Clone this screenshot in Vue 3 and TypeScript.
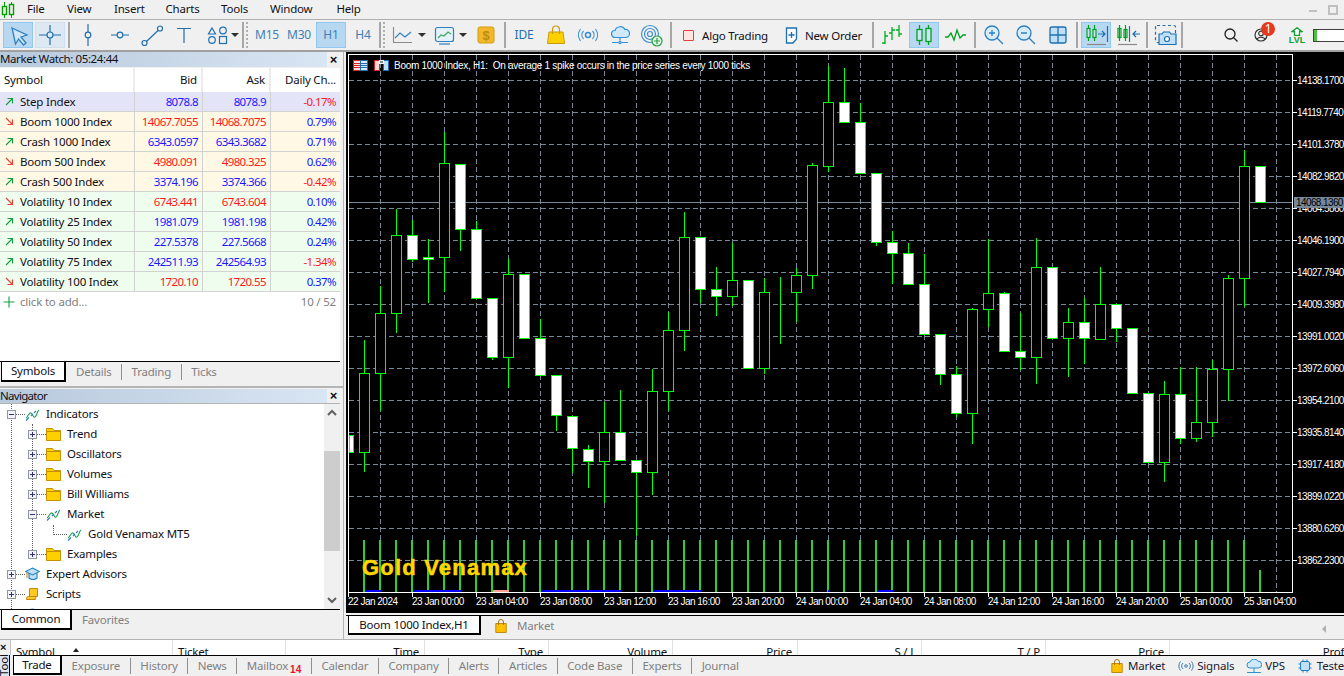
<script setup lang="ts">
type Candle = [string, number, number, number, number]
const raw: Candle[] = [
  ['w',435,435,452,452],['b',340,373,452,471],['b',286,313,373,410],['b',209,235,313,332],['w',220,235,259,261],
  ['w',239,257,259,302],['b',132,163,257,291],['w',164,164,229,250],['w',221,229,298,298],['w',298,298,357,359],
  ['b',259,274,357,387],['w',274,274,338,338],['w',319,338,375,375],['w',375,375,415,430],['w',416,416,448,472],
  ['w',445,449,461,487],['b',402,432,461,502],['w',390,432,460,460],['w',460,460,472,535],['b',369,391,472,494],
  ['b',312,330,391,410],['b',212,237,330,350],['w',237,237,289,302],['w',267,289,296,315],['b',243,280,296,305],
  ['w',280,280,368,368],['b',278,292,368,373],['b',277,292,292,343],['b',268,275,292,321],['b',163,165,275,288],
  ['b',66,102,166,171],['w',68,102,122,122],['w',103,122,173,173],['w',173,173,242,245],['w',231,242,253,283],
  ['w',243,253,284,284],['w',254,284,334,334],['w',334,334,374,384],['w',366,374,413,416],['b',308,309,413,443],
  ['b',239,293,309,326],['w',292,293,351,351],['w',313,351,357,369],['b',238,267,357,383],['w',267,267,338,338],
  ['b',308,322,338,376],['w',298,322,338,363],['b',267,304,339,339],['w',304,304,328,341],['w',328,328,393,393],
  ['w',393,393,462,462],['b',381,394,462,481],['w',367,394,438,443],['b',367,422,438,441],['b',360,369,422,436],
  ['b',275,278,369,400],['b',150,166,278,306],['w',166,166,202,202],
]
const candles = raw.map((c, i) => ({ x: 348 + i * 16, white: c[0] === 'w', hi: c[1], top: c[2], bot: c[3], lo: c[4] }))
const bars = candles.slice(1).map((c) => ({ x: c.x, top: c.x === 1260 ? 570 : 540 }))
const blues = [[365, 16], [413, 48], [541, 80], [653, 48], [828, 2], [877, 16]]

const prices = ['14138.1700','14119.7740','14101.3780','14082.9820','14064.5860','14046.1900','14027.7940','14009.3980','13991.0020','13972.6060','13954.2100','13935.8140','13917.4180','13899.0220','13880.6260','13862.2300']
  .map((t, i) => ({ t, y: 80 + i * 32 }))
const vgrid = Array.from({ length: 29 }, (_, i) => 380 + i * 32)
const times = ['22 Jan 2024','23 Jan 00:00','23 Jan 04:00','23 Jan 08:00','23 Jan 12:00','23 Jan 16:00','23 Jan 20:00','24 Jan 00:00','24 Jan 04:00','24 Jan 08:00','24 Jan 12:00','24 Jan 16:00','24 Jan 20:00','25 Jan 00:00','25 Jan 04:00']
  .map((t, i) => ({ t, x: 348 + i * 64 }))
const note = 'Boom 1000 Index, H1:  On average 1 spike occurs in the price series every 1000 ticks'

const menus = [
  { t: 'File', w: 40 }, { t: 'View', w: 47 }, { t: 'Insert', w: 51.5 }, { t: 'Charts', w: 55.5 },
  { t: 'Tools', w: 49 }, { t: 'Window', w: 66.5 }, { t: 'Help', w: 40 },
]

const quotes = [
  { s: 'Step Index', b: '8078.8', a: '8078.9', c: '-0.17%', up: true, q: 'up', neg: true, k: 'step' },
  { s: 'Boom 1000 Index', b: '14067.7055', a: '14068.7075', c: '0.79%', up: false, q: 'dn', neg: false, k: 'cream' },
  { s: 'Crash 1000 Index', b: '6343.0597', a: '6343.3682', c: '0.71%', up: true, q: 'up', neg: false, k: 'cream' },
  { s: 'Boom 500 Index', b: '4980.091', a: '4980.325', c: '0.62%', up: false, q: 'dn', neg: false, k: 'cream' },
  { s: 'Crash 500 Index', b: '3374.196', a: '3374.366', c: '-0.42%', up: true, q: 'up', neg: true, k: 'cream' },
  { s: 'Volatility 10 Index', b: '6743.441', a: '6743.604', c: '0.10%', up: false, q: 'dn', neg: false, k: 'mint' },
  { s: 'Volatility 25 Index', b: '1981.079', a: '1981.198', c: '0.42%', up: true, q: 'up', neg: false, k: 'mint' },
  { s: 'Volatility 50 Index', b: '227.5378', a: '227.5668', c: '0.24%', up: true, q: 'up', neg: false, k: 'mint' },
  { s: 'Volatility 75 Index', b: '242511.93', a: '242564.93', c: '-1.34%', up: true, q: 'up', neg: true, k: 'mint' },
  { s: 'Volatility 100 Index', b: '1720.10', a: '1720.55', c: '0.37%', up: false, q: 'dn', neg: false, k: 'mint' },
]

const tree = [
  { t: 'Indicators', l: 'l0', box: 'minus', icon: 'ind' },
  { t: 'Trend', l: 'l1', box: 'plus', icon: 'folder' },
  { t: 'Oscillators', l: 'l1', box: 'plus', icon: 'folder' },
  { t: 'Volumes', l: 'l1', box: 'plus', icon: 'folder' },
  { t: 'Bill Williams', l: 'l1', box: 'plus', icon: 'folder' },
  { t: 'Market', l: 'l1', box: 'minus', icon: 'ind' },
  { t: 'Gold Venamax MT5', l: 'l2', box: '', icon: 'ind' },
  { t: 'Examples', l: 'l1', box: 'plus', icon: 'folder' },
  { t: 'Expert Advisors', l: 'l0', box: 'plus', icon: 'cap' },
  { t: 'Scripts', l: 'l0', box: 'plus', icon: 'script' },
]

const cols = [
  { t: 'Symbol', w: 162, left: true, sort: true },
  { t: 'Ticket', w: 113, left: true },
  { t: 'Time', w: 139 }, { t: 'Type', w: 124 }, { t: 'Volume', w: 124 }, { t: 'Price', w: 125 },
  { t: 'S / L', w: 124 }, { t: 'T / P', w: 124 }, { t: 'Price', w: 124 }, { t: 'Profit', w: 187 },
]
const lowerTabs = ['Exposure', 'History', 'News', 'Mailbox', 'Calendar', 'Company', 'Alerts', 'Articles', 'Code Base', 'Experts', 'Journal']
</script>

<template>
  <div class="app">
    <header class="menu">
      <svg class="logo" width="16" height="18" viewBox="0 0 16 18" fill="none" stroke="#00a000">
        <path d="M4.5 1v16M11.5 1v16" stroke-width="1" />
        <rect x="2.5" y="5.5" width="4" height="8" fill="#f0f0f0" stroke-width="1.4" />
        <rect x="9.5" y="3.5" width="4" height="10" fill="#f0f0f0" stroke-width="1.4" />
      </svg>
      <span v-for="m in menus" :key="m.t" class="menu-item" :style="{ width: m.w + 'px' }">{{ m.t }}</span>
      <span class="win-min"></span>
      <span class="win-max"></span>
    </header>

    <div class="toolbar">
      <button class="b on">
        <svg width="30" height="26" fill="#cfe6f7" stroke="#2f7fc0" stroke-width="1.3"><path d="M9 6l15 7-6 2 5 6-2.500 2-5-6-3 5z" /></svg>
      </button>
      <button class="b hov">
        <svg width="30" height="26" fill="none" stroke="#1f6fb0" stroke-width="1.2"><path d="M15 3v7M15 16v7M4 13h8M18 13h8" /><circle cx="15" cy="13" r="3" /></svg>
      </button>
      <i class="sep"></i>
      <button class="b"><svg width="30" height="26" fill="none" stroke="#1f6fb0" stroke-width="1.2"><path d="M15 2v8M15 16v8" /><circle cx="15" cy="13" r="2.800" /></svg></button>
      <button class="b"><svg width="30" height="26" fill="none" stroke="#1f6fb0" stroke-width="1.2"><path d="M6 13h6M18 13h6" /><circle cx="15" cy="13" r="2.800" /></svg></button>
      <button class="b"><svg width="30" height="26" fill="none" stroke="#1f6fb0" stroke-width="1.2"><path d="M9.500 19.500L21 8.500" /><circle cx="7.500" cy="21" r="2.500" /><circle cx="23" cy="6.500" r="2.500" /></svg></button>
      <button class="b"><svg width="30" height="26" fill="none" stroke="#1f6fb0" stroke-width="1.2"><path d="M8 6.500h14M15 6.500V21" /></svg></button>
      <button class="b mr0"><svg width="30" height="26" fill="none" stroke="#1f6fb0" stroke-width="1.2"><path d="M11 6l3.500 6h-7z" /><circle cx="22" cy="8.500" r="3.300" /><circle cx="11" cy="18" r="3.300" /><rect x="18.500" y="14.500" width="7" height="7" /></svg></button>
      <i class="caret"></i>
      <i class="sep s3"></i><i class="grip g1"></i>
      <button class="b tf">M15</button>
      <button class="b tf">M30</button>
      <button class="b tf on">H1</button>
      <button class="b tf">H4</button>
      <i class="sep s4"></i><i class="grip g2"></i>
      <button class="b mr0"><svg width="30" height="26" fill="none" stroke-width="1.1"><path d="M5.500 5v15.500H24" stroke="#8a8a8a" /><path d="M7 16l5-5 5 4 6-5" stroke="#2f7fc0" /></svg></button>
      <i class="caret"></i>
      <button class="b mr0 ml3"><svg width="30" height="26" fill="none" stroke-width="1.2"><rect x="6.500" y="5.500" width="18" height="14" rx="2" stroke="#2f7fc0" fill="#e4f2fc" /><path d="M9 16l3-3 3 1 4-4 3 2" stroke="#40a860" /><path d="M10 22h11" stroke="#2f7fc0" /></svg></button>
      <i class="caret"></i>
      <button class="b ml4"><svg width="30" height="26"><rect x="7" y="5" width="16" height="16" rx="2" fill="#f2b829" stroke="#d89a10" /><text x="15" y="18" text-anchor="middle" class="dollar">$</text></svg></button>
      <i class="sep"></i>
      <button class="b ide">IDE</button>
      <button class="b">
        <svg width="30" height="26"><path d="M8 10h14l1.500 11.500h-17z" fill="#ffd000" stroke="#c89a10" /><path d="M11.500 12V7.500a3.500 3.500 0 0 1 7 0V12" fill="none" stroke="#c89a10" stroke-width="1.2" /></svg>
      </button>
      <button class="b">
        <svg width="30" height="26" fill="none" stroke="#3f8fd0" stroke-width="1.2"><circle cx="15" cy="13" r="2.500" stroke-width="1.600" /><path d="M10.500 9a6 6 0 0 0 0 8M19.500 9a6 6 0 0 1 0 8M7.500 7a10 10 0 0 0 0 12M22.500 7a10 10 0 0 1 0 12" /></svg>
      </button>
      <button class="b">
        <svg width="30" height="26" fill="none" stroke="#2f8fd8" stroke-width="1.2"><path d="M10 15.500a3.500 3.500 0 0 1 0-7 5.500 5.500 0 0 1 10-1 4 4 0 0 1 1 8z" fill="#cfe8fa" /><path d="M15 15.500v3M7 20.500h6M17 20.500h6" /><circle cx="15" cy="20.500" r="1.200" /></svg>
      </button>
      <button class="b">
        <svg width="30" height="26" fill="none"><g stroke="#3f8fd0" stroke-width="1.2"><circle cx="13" cy="12" r="8.500" /><circle cx="13" cy="12" r="5.500" /><circle cx="13" cy="12" r="2.500" /></g><circle cx="20" cy="19" r="5" fill="#e8f8ea" stroke="#20a040" stroke-width="1.200" /><path d="M20 16v6M17 19h6" stroke="#20a040" stroke-width="1.200" /></svg>
      </button>
      <i class="sep sm2"></i>
      <button class="tx algo"><i class="algo-box"></i><span>Algo Trading</span></button>
      <button class="tx neword">
        <svg width="13" height="17" fill="#fff" stroke="#1f6fb0" stroke-width="1.3"><path d="M1.500 1h10v11l-3.500 4H1.500z" /><path d="M6.500 5v6M3.500 8h6" /></svg>
        <span>New Order</span>
      </button>
      <i class="sep s0"></i>
      <button class="b">
        <svg width="30" height="26" fill="none" stroke="#00b020" stroke-width="1.3"><path d="M8 9v13M5 21h3M8 14h3M15 5v13M12 11h3M15 8h3M22 3v12M19 8h3M22 12h3" /></svg>
      </button>
      <button class="b on">
        <svg width="30" height="26" fill="none" stroke="#00a020" stroke-width="1.300"><path d="M10.500 3v20M19.500 3v20" /><rect x="8" y="7.500" width="5" height="11" fill="#cfe6f7" /><rect x="17" y="6.500" width="5" height="13" fill="#cfe6f7" /></svg>
      </button>
      <button class="b">
        <svg width="30" height="26" fill="none" stroke="#00a020" stroke-width="1.300"><path d="M4 15h3l3-4 3 7 3-10 3 8 3-3h3" /></svg>
      </button>
      <i class="sep"></i>
      <button class="b"><svg width="30" height="26" fill="none" stroke="#2f7fc0" stroke-width="1.300"><circle cx="13" cy="11" r="7" fill="#d8ecfa" /><path d="M18 16l6 6M10 11h6M13 8v6" /></svg></button>
      <button class="b"><svg width="30" height="26" fill="none" stroke="#2f7fc0" stroke-width="1.300"><circle cx="13" cy="11" r="7" fill="#d8ecfa" /><path d="M18 16l6 6M10 11h6" /></svg></button>
      <button class="b"><svg width="30" height="26" stroke="#1f6fb0" stroke-width="1.300"><rect x="7" y="5" width="16" height="16" rx="2" fill="#bfe0f8" /><path d="M15 5v16M7 13h16" fill="none" /></svg></button>
      <i class="sep"></i>
      <button class="b on"><svg width="30" height="26" fill="none" stroke-width="1.200"><path d="M7.500 3v16M13.500 3v16" stroke="#00a020" /><rect x="6" y="6.500" width="3" height="9" fill="#cfe6f7" stroke="#00a020" /><rect x="12" y="7.500" width="3" height="8" fill="#cfe6f7" stroke="#00a020" /><path d="M17 12h7M21 9l3 3-3 3M26.500 4v16" stroke="#1f6fb0" /><path d="M6 22.500h19" stroke="#8a8a8a" /></svg></button>
      <button class="b"><svg width="30" height="26" fill="none" stroke-width="1.200"><path d="M6.500 3v16M12.500 3v16" stroke="#00a020" /><rect x="5" y="6.500" width="3" height="9" stroke="#00a020" /><rect x="11" y="7.500" width="3" height="8" stroke="#00a020" /><path d="M16.500 4v16M27 12h-7M23 9l-3 3 3 3" stroke="#1f6fb0" /><path d="M5 22.500h19" stroke="#8a8a8a" /></svg></button>
      <i class="sep"></i>
      <button class="b mr0"><svg width="30" height="26" fill="none" stroke="#1f6fb0" stroke-width="1.200"><rect x="4.500" y="3.500" width="20" height="17" rx="1.500" stroke-dasharray="3 2.500" /><path d="M11 12l1.500-2h6l1.500 2h5v10.500H8V12z" fill="#bfe0f8" /><circle cx="16" cy="17" r="2.500" fill="#fff" /></svg></button>
      <i class="sep s00"></i>
      <div class="tool-right">
        <svg class="ic-search" width="14" height="14" fill="none" stroke="#222" stroke-width="1.300"><circle cx="6" cy="6" r="5" /><path d="M9.500 9.500l4 4" /></svg>
        <div class="user">
          <svg width="14" height="14" fill="none" stroke="#333" stroke-width="1.200"><circle cx="7" cy="7" r="6" /><circle cx="7" cy="5.500" r="2.300" /><path d="M2.800 11.500c1-3 7.400-3 8.400 0" /></svg>
          <span class="badge">1</span>
        </div>
        <div class="lvl">
          <svg width="12" height="9" fill="#fff" stroke="#10a030" stroke-width="1.300"><path d="M6 .8L11 4.500H8.500V8.500H3.500V4.500H1z" /></svg>
          <span>LVL</span>
        </div>
        <div class="bar"><i></i></div>
      </div>
    </div>

    <div class="work">
      <aside class="left">
        <section class="market">
          <div class="title"><span class="title-fill">Market Watch: 05:24:44</span><b class="close">×</b></div>
          <div class="grid head">
            <div class="c sym">Symbol</div><div class="c r">Bid</div><div class="c r">Ask</div><div class="c r">Daily Ch...</div>
          </div>
          <div v-for="q in quotes" :key="q.s" class="grid row" :class="q.k">
            <div class="c sym">
              <svg v-if="q.up" class="arrow" width="9" height="9" fill="none" stroke="#10a040" stroke-width="1.100"><path d="M1 8L7.500 1.500M2.500 1.500h5v5" /></svg>
              <svg v-else class="arrow" width="9" height="9" fill="none" stroke="#e84030" stroke-width="1.100"><path d="M1 1l6.500 6.500M2.500 7.500h5v-5" /></svg>
              <span>{{ q.s }}</span>
            </div>
            <div class="c r num" :class="q.q">{{ q.b }}</div>
            <div class="c r num" :class="q.q">{{ q.a }}</div>
            <div class="c r num" :class="q.neg ? 'dn' : 'up'">{{ q.c }}</div>
          </div>
          <div class="add">
            <svg width="12" height="12" stroke="#10a040" stroke-width="1.100"><path d="M6 .5v11M.5 6h11" /></svg>
            <span>click to add...</span><em>10 / 52</em>
          </div>
          <div class="fill"></div>
          <div class="tabs mw-tabs">
            <span class="tab active sym-tab">Symbols</span>
            <span class="tab off">Details</span><span class="tab off">Trading</span><span class="tab off last">Ticks</span>
          </div>
        </section>

        <section class="nav">
          <div class="title"><span class="title-fill">Navigator</span><b class="close">×</b></div>
          <div class="nav-body">
            <div class="tree">
              <i class="vline v0"></i><i class="vline v1"></i>
              <div v-for="n in tree" :key="n.t" class="node" :class="n.l">
                <span v-if="n.box" class="box"><i></i><i v-if="n.box === 'plus'" class="vert"></i></span>
                <span class="conn"></span>
                <svg v-if="n.icon === 'folder'" class="ni" width="15" height="13"><path d="M.5 12.500V.5h6l1.500 2h6.500v10z" fill="#ffd000" stroke="#c89000" /><path d="M.5 3.500h14" stroke="#c89000" /></svg>
                <svg v-else-if="n.icon === 'ind'" class="ni" width="15" height="13" fill="none" stroke-width="1.100"><path d="M1 10c2-1 3-6 5-5s2 5 4 4 2-6 4-7" stroke="#20a050" /><path d="M1 12.500l3-3M6 8l2-2M9 5l2-2" stroke="#2f7fc0" /></svg>
                <svg v-else-if="n.icon === 'cap'" class="ni" width="15" height="14" fill="#bfe0f8" stroke="#1f7fc0" stroke-width="1.100"><path d="M4 6v5c2 2 6 2 8 0V6" /><path d="M7.500 1l7 3.500-7 3.500L.5 4.500z" /><path d="M2 5v6" fill="none" stroke="#d09000" /></svg>
                <svg v-else class="ni" width="15" height="14" fill="#ffc820" stroke="#c08800"><path d="M4.500 1.500h8v8h-8zM1.500 12.500c0-3 1-3 3-3h7c-1 1-1 2-1 3z" /></svg>
                <span class="nt">{{ n.t }}</span>
              </div>
              <div class="node l0">
                <span class="box"><i></i><i class="vert"></i></span><span class="conn"></span>
                <svg class="ni" width="15" height="13" fill="#bfe0f8" stroke="#2f7fc0"><circle cx="7.500" cy="6" r="5" /></svg>
              </div>
            </div>
            <div class="scroll">
              <svg width="16" height="17" fill="none" stroke="#606060" stroke-width="2"><path d="M4 11l4-4 4 4" /></svg>
              <div class="thumb"></div>
              <svg class="down" width="16" height="17" fill="none" stroke="#606060" stroke-width="2"><path d="M4 6l4 4 4-4" /></svg>
            </div>
          </div>
          <div class="tabs nv-tabs">
            <span class="tab active com-tab">Common</span><span class="tab off last">Favorites</span>
          </div>
        </section>
      </aside>

      <main class="right">
        <div class="chart">
          <svg width="998" height="561" viewBox="346 52 998 561" class="plot">
            <rect x="346" y="52" width="998" height="561" fill="#000" />
            <path d="M348.500 592.500V54.500H1292.500V592.500H348.500" fill="none" stroke="#fff" shape-rendering="crispEdges" />
            <g stroke="#778899" stroke-dasharray="5 3" shape-rendering="crispEdges">
              <line v-for="p in prices" :key="p.t" x1="349" :y1="p.y + 0.5" x2="1292" :y2="p.y + 0.5" />
              <line v-for="x in vgrid" :key="x" :x1="x + 0.5" y1="55" :x2="x + 0.5" y2="592" />
            </g>
            <line x1="349" y1="202.500" x2="1292" y2="202.500" stroke="#778899" shape-rendering="crispEdges" />
            <g fill="#32cd32" shape-rendering="crispEdges">
              <rect v-for="b in bars" :key="b.x" :x="b.x - 1" :y="b.top" width="2" :height="592 - b.top" />
            </g>
            <g fill="#0000ff" shape-rendering="crispEdges">
              <rect v-for="b in blues" :key="b[0]" :x="b[0]" y="590" :width="b[1]" height="2" />
            </g>
            <rect x="493" y="590" width="16" height="2" fill="#ffa090" shape-rendering="crispEdges" />
            <g stroke="#00ff00" shape-rendering="crispEdges">
              <template v-for="c in candles" :key="c.x">
                <line v-if="c.x > 348" :x1="c.x + 0.5" :y1="c.hi" :x2="c.x + 0.5" :y2="c.lo + 1" />
                <rect v-if="c.x > 348" :x="c.x - 4.500" :y="c.top + 0.5" width="10" :height="c.bot - c.top" :fill="c.white ? '#fff' : '#000'" />
                <rect v-else x="349.500" :y="c.top + 0.5" width="4" :height="c.bot - c.top" fill="#fff" />
              </template>
            </g>
            <g fill="#fff" stroke="none">
              <g v-for="p in prices" :key="p.t">
                <rect x="1292" :y="p.y" width="5" height="1" shape-rendering="crispEdges" />
                <text x="1297" :y="p.y + 4" class="axis pr">{{ p.t }}</text>
              </g>
              <g v-for="t in times" :key="t.t">
                <rect :x="t.x" y="592" width="1" height="5" shape-rendering="crispEdges" />
                <text :x="t.x" y="605" class="axis">{{ t.t }}</text>
              </g>
            </g>
            <rect x="1294" y="197" width="50" height="11" fill="#778899" shape-rendering="crispEdges" />
            <text x="1296" y="206" class="axis pr dark">14068.1360</text>
            <g shape-rendering="crispEdges">
              <rect x="353.500" y="60.500" width="7" height="10" fill="#ffe0e0" stroke="#e02020" />
              <rect x="360.500" y="60.500" width="7" height="10" fill="#d8ecfa" stroke="#1f6fb0" />
              <path d="M354 63.500h6M354 65.500h6M354 67.500h6" stroke="#e02020" />
              <path d="M361 63.500h6M361 65.500h6M361 67.500h6" stroke="#1f6fb0" />
              <path d="M374.500 60.500h5v10h-5z" fill="#ffd8d8" stroke="#e02020" />
              <path d="M383.500 60.500h5v10h-5z" fill="#bfe0f8" stroke="#1f6fb0" />
              <rect x="379" y="60" width="5" height="4" fill="#fff" />
              <rect x="380" y="61" width="3" height="2" fill="#888" />
            </g>
            <text x="394" y="68.500" class="note">{{ note }}</text>
            <text x="362" y="575" class="brand">Gold Venamax</text>
          </svg>
        </div>
        <div class="chart-tabs">
          <span class="chart-tab">Boom 1000 Index,H1</span>
          <svg class="bag" width="12" height="14"><path d="M.8 4.500h10.400v9H.8z" fill="#ffc000" stroke="#c08a10" /><path d="M3.500 6V3a2.500 2.500 0 0 1 5 0v3" fill="none" stroke="#a07810" /></svg>
          <span class="chart-off">Market</span>
          <i class="back"></i>
        </div>
      </main>
    </div>

    <footer class="bottom">
      <div class="side">
        <b class="side-x">×</b>
        <div class="side-text"><span>Toolbox</span></div>
      </div>
      <div class="tool">
        <div class="thead">
          <div v-for="(c, i) in cols" :key="i" class="th" :class="{ tl: c.left }" :style="{ width: c.w + 'px' }">
            {{ c.t }}<i v-if="c.sort" class="sort"></i>
          </div>
        </div>
        <div class="low">
          <span class="low-active">Trade</span>
          <span v-for="t in lowerTabs" :key="t" class="low-tab">{{ t }}<sub v-if="t === 'Mailbox'">14</sub></span>
          <div class="links">
            <svg width="12" height="14"><path d="M.8 4.500h10.400v9H.8z" fill="#ffc000" stroke="#c08a10" /><path d="M3.500 6V3a2.500 2.500 0 0 1 5 0v3" fill="none" stroke="#a07810" /></svg>
            <span class="l1t">Market</span>
            <svg class="li" width="16" height="10" fill="none" stroke="#3f7fb0"><circle cx="8" cy="5" r="1.300" /><path d="M5 2a4 4 0 0 0 0 6M11 2a4 4 0 0 1 0 6M2.500 .5a7 7 0 0 0 0 9M13.500 .5a7 7 0 0 1 0 9" /></svg>
            <span class="l2t">Signals</span>
            <svg class="li2" width="16" height="15" fill="#cfe8fa" stroke="#2f8fd0"><path d="M4 9a3 3 0 0 1 0-6 4.500 4.500 0 0 1 8-.8A3.400 3.400 0 0 1 12.500 9z" /><path d="M8 9v4M1 13.500h14" fill="none" /></svg>
            <span class="l3t">VPS</span>
            <svg class="li3" width="14" height="14" fill="#bfe0f8" stroke="#1f7fc0"><rect x="2.500" y="2.500" width="9" height="9" rx="1.500" /><path d="M5 .5v2M9 .5v2M5 11.500v2M9 11.500v2M.5 5h2M.5 9h2M11.500 5h2M11.500 9h2" /></svg>
            <span class="l4t">Tester</span>
          </div>
        </div>
      </div>
    </footer>
  </div>
</template>

<style>
html, body { margin: 0; background: #f0f0f0; overflow: hidden; }
</style>

<style scoped>
.app { width: 1344px; height: 676px; overflow: hidden; display: flex; flex-direction: column; background: #f0f0f0; font: 11.5px/16px "Noto Sans", sans-serif; letter-spacing: -0.2px; color: #101018; }
button { font: inherit; letter-spacing: inherit; color: inherit; background: none; border: 0; padding: 0; }
svg { display: block; flex: none; }

.menu { height: 19px; border-bottom: 1px solid #b0b0b0; display: flex; align-items: center; box-sizing: content-box; position: relative; }
.logo { margin-right: 11px; }
.menu-item { flex: none; position: relative; top: -1px; }
.win-min { position: absolute; left: 1309px; top: 10px; width: 8px; height: 2px; background: #c0c0c0; }
.win-max { position: absolute; left: 1328px; top: 5px; width: 6px; height: 6px; border: 2px solid #c0c0c0; }

.toolbar { height: 30px; border-bottom: 2px solid #a0a0a0; display: flex; align-items: center; padding-left: 3px; }
.b { width: 30px; height: 26px; margin-right: 2px; flex: none; border: 1px solid transparent; box-sizing: border-box; display: flex; align-items: center; justify-content: center; overflow: hidden; }
.b svg { margin: -1px; }
.b.on { background: #b8d8f2; border-color: #90c8f0; }
.b.hov { background: #dde8f2; border-color: #d0e0f0; }
.mr0 { margin-right: 0; }
.ml3 { margin-left: 3px; }
.ml4 { margin-left: 4px; }
.tf { color: #3f7fb5; font-size: 12px; }
.ide { color: #1f6fb0; font-size: 12px; }
.dollar { font: bold 13px "Liberation Sans", sans-serif; fill: #c08a10; }
.sep { width: 2px; height: 26px; background: #a6a6a6; flex: none; margin: 0 3px 0 1px; }
.s3 { margin: 0 0 0 3px; }
.s4 { margin: 0 0 0 -1px; }
.sm2 { margin-right: 2px; }
.s0 { margin: 0 3px 0 0; }
.s00 { margin: 0; }
.grip { width: 2px; height: 26px; flex: none; background: repeating-linear-gradient(#b0b0b0 0 2px, transparent 2px 4px); }
.g1 { margin: 0 4px 0 2px; }
.g2 { margin: 0 3px 0 2px; }
.caret { width: 8px; height: 8px; flex: none; position: relative; }
.caret::after { content: ""; position: absolute; left: 0; top: 2px; border: 4px solid transparent; border-top: 4px solid #303030; border-bottom: 0; }
.tx { height: 26px; display: flex; align-items: center; flex: none; white-space: nowrap; }
.tx span { position: relative; top: 1px; }
.algo { width: 105px; padding-left: 9px; box-sizing: border-box; gap: 8px; }
.algo-box { width: 9px; height: 9px; border: 1px solid #e04040; background: #ffe4e0; border-radius: 1px; flex: none; }
.neword { width: 91px; margin-right: 2px; padding-left: 6px; box-sizing: border-box; gap: 7px; }
.tool-right { flex: 1; display: flex; align-items: center; padding-left: 41px; position: relative; }
.user { margin-left: 16px; position: relative; }
.badge { position: absolute; left: 7px; top: -6px; width: 14px; height: 14px; border-radius: 50%; background: #e53a20; color: #fff; font-size: 12px; line-height: 14px; text-align: center; }
.lvl { margin-left: 21px; width: 16px; display: flex; flex-direction: column; align-items: center; color: #10a030; font: bold 9px/9px "Liberation Sans", sans-serif; letter-spacing: 0; margin-top: 1px; }
.bar { margin-left: 8px; width: 40px; height: 11px; border: 1px solid #404040; background: #fff; flex: none; }
.bar i { display: block; width: 3px; height: 100%; background: #50c040; }

.work { flex: none; height: 587px; display: flex; }
.left { width: 343px; flex: none; border-right: 1px solid #b4b4b4; margin-right: 2px; display: flex; flex-direction: column; }
.market { height: 334px; flex: none; display: flex; flex-direction: column; border-bottom: 2px solid #b4b4b4; box-sizing: content-box; }
.title { height: 15px; display: flex; align-items: center; width: 340px; flex: none; line-height: 14px; }
.title-fill { width: 327px; height: 15px; background: linear-gradient(90deg, #b8c9dc, #d8e5f3); flex: none; white-space: nowrap; letter-spacing: -0.4px; }
.close { flex: 1; text-align: center; font: bold 13px/14px "Liberation Sans", sans-serif; }
.grid { display: grid; grid-template-columns: 135px 68px 68px 69px; width: 340px; flex: none; }
.head { height: 24px; background: #fff; margin-top: 1px; }
.head .c { border-right: 2px solid #ececec; }
.row { height: 20px; border-bottom: 1px solid #d2d2d2; box-sizing: border-box; }
.c { display: flex; align-items: center; border-right: 1px solid #d2d2d2; padding: 0 4px; overflow: hidden; white-space: nowrap; }
.c:last-child { border-right: 0; }
.r { justify-content: flex-end; }
.num { letter-spacing: -0.6px; }
.sym { padding-left: 4px; }
.row .sym { padding-left: 5px; gap: 6px; }
.arrow { margin-top: -1px; }
.step { background: #e4e4f8; }
.cream { background: #fff8e4; }
.mint { background: #effdef; }
.up { color: #1818ff; }
.dn { color: #ff1818; }
.add { height: 20px; background: #fff; display: flex; align-items: center; padding: 0 4px 0 3px; width: 340px; box-sizing: border-box; color: #808080; flex: none; }
.add span { margin-left: 5px; }
.add em { margin-left: auto; font-style: normal; }
.fill { flex: 1; width: 340px; background: #fff; }
.tabs { display: flex; height: 25px; width: 340px; border-top: 1px solid #000; flex: none; align-items: flex-start; box-sizing: border-box; }
.tab { height: 20px; display: flex; align-items: center; flex: none; }
.tab.active { background: #fff; border: 1px solid #000; border-top: 0; border-right-width: 2px; border-bottom-width: 2px; box-sizing: border-box; justify-content: center; margin-left: 1px; }
.sym-tab { width: 65px; margin-right: 10px; }
.com-tab { width: 71px; margin-right: 10px; }
.tab.off { color: #808080; padding-right: 9.5px; margin-right: 9.5px; height: 16px; margin-top: 2px; border-right: 1px solid #909090; }
.tab.off.last { border: 0; padding: 0; margin: 2px 0 0; }

.nav { flex: 1; padding-top: 1px; display: flex; flex-direction: column; min-height: 0; }
.nav .title { border-bottom: 1px solid #b4b4b4; height: 14px; box-sizing: content-box; }
.nav .title-fill { height: 14px; line-height: 13px; letter-spacing: -0.7px; }
.nav-body { height: 205px; display: flex; width: 340px; flex: none; background: #fff; }
.tree { flex: 1; position: relative; overflow: hidden; }
.vline { position: absolute; width: 0; border-left: 1px dotted #606060; }
.v0 { left: 11px; top: 0; bottom: 0; }
.v1 { left: 32px; top: 20px; height: 130px; }
.node { height: 20px; display: flex; align-items: center; position: relative; }
.l0 { padding-left: 7px; }
.l1 { padding-left: 28px; }
.l2 { padding-left: 53px; }
.box { width: 9px; height: 9px; border: 1px solid #9098a8; background: #f4f4f8; box-sizing: border-box; position: relative; flex: none; }
.box i { position: absolute; left: 1px; top: 3px; width: 5px; height: 1px; background: #30308a; }
.box i.vert { left: 3px; top: 1px; width: 1px; height: 5px; }
.conn { width: 9px; height: 0; border-top: 1px dotted #606060; flex: none; box-sizing: border-box; position: relative; }
.l2 .conn { width: 14px; }
.l2 .conn::before { content: ""; position: absolute; left: 0; top: -10px; height: 10px; border-left: 1px dotted #606060; }
.ni { margin-right: 6px; background: transparent; }
.nt { white-space: nowrap; }
.scroll { width: 16px; background: #f0f0f0; display: flex; flex-direction: column; flex: none; }
.thumb { height: 100px; margin-top: 30px; background: #cdcdcd; }
.down { margin-top: auto; }

.right { flex: 1; min-width: 0; display: flex; flex-direction: column; }
.chart { height: 561px; flex: none; background: #000; }
.plot { display: block; }
.axis { font: 10px "Liberation Sans", sans-serif; letter-spacing: -0.5px; }
.pr { letter-spacing: -0.6px; }
.dark { fill: #000; }
.note { font: 10px "Liberation Sans", sans-serif; fill: #fff; white-space: pre; letter-spacing: -0.29px; }
.brand { font: bold 22px "Liberation Sans", sans-serif; fill: #ffd700; stroke: #ffd700; stroke-width: 0.5px; letter-spacing: 1.2px; }
.chart-tabs { margin-top: 2px; height: 24px; border-top: 1px solid #000; display: flex; align-items: flex-start; position: relative; padding-left: 2px; flex: none; }
.chart-tab { width: 133px; height: 19px; background: #fff; box-sizing: border-box; border: 1px solid #000; border-top: 0; border-right-width: 2px; border-bottom-width: 2px; display: flex; align-items: center; justify-content: center; white-space: nowrap; }
.bag { margin: 3px 0 0 14px; }
.chart-off { color: #808080; margin: 2px 0 0 10px; }
.back { position: absolute; left: 976px; top: 9px; border: 4px solid transparent; border-right-color: #b0b0b0; border-left: 0; }

.bottom { flex: 1; display: flex; border-top: 1px solid #b4b4b4; min-height: 0; }
.side { width: 10px; flex: none; display: flex; flex-direction: column; }
.side-x { height: 15px; font: bold 11px/14px "Liberation Sans", sans-serif; }
.side-text { flex: 1; background: #dbe6f2; border-right: 1px solid #000; width: 9px; overflow: hidden; position: relative; }
.side-text span { position: absolute; bottom: 0; left: -3px; writing-mode: vertical-rl; transform: rotate(180deg); line-height: 14px; white-space: nowrap; }
.tool { flex: 1; min-width: 0; display: flex; flex-direction: column; }
.thead { height: 15px; display: flex; background: #fff; overflow: hidden; flex: none; border-left: 1px solid #c0c0c0; }
.th { flex: none; box-sizing: border-box; border-right: 1px solid #e0e0e0; text-align: right; padding: 4px 5px 0; white-space: nowrap; line-height: 16px; position: relative; }
.tl { text-align: left; }
.sort { position: absolute; left: 62px; top: 8px; border: 3px solid transparent; border-bottom: 4px solid #202020; border-top: 0; }
.low { flex: 1; display: flex; align-items: flex-start; border-top: 1px solid #000; margin-left: 3px; white-space: nowrap; position: relative; }
.low-active { width: 49px; height: 19px; background: #fff; border: 1px solid #000; border-top: 0; border-right-width: 2px; border-bottom-width: 2px; box-sizing: border-box; text-align: center; line-height: 18px; flex: none; }
.low-tab { color: #808080; padding: 0 9.6px; border-right: 1px solid #909090; height: 16px; margin-top: 2px; line-height: 16px; flex: none; }
.low-tab:last-of-type { border: 0; }
.low-tab sub { color: #f01030; font: bold 10px/10px "Liberation Sans", sans-serif; letter-spacing: 0; margin-left: 2px; vertical-align: -3px; }
.links { position: absolute; left: 1098px; top: 2px; display: flex; align-items: center; height: 16px; color: #202030; }
.l1t { margin-left: 5px; }
.li { margin-left: 13px; }
.l2t { margin-left: 3px; }
.li2 { margin-left: 12px; }
.l3t { margin-left: 3px; }
.li3 { margin-left: 13px; }
.l4t { margin-left: 5px; }
</style>
